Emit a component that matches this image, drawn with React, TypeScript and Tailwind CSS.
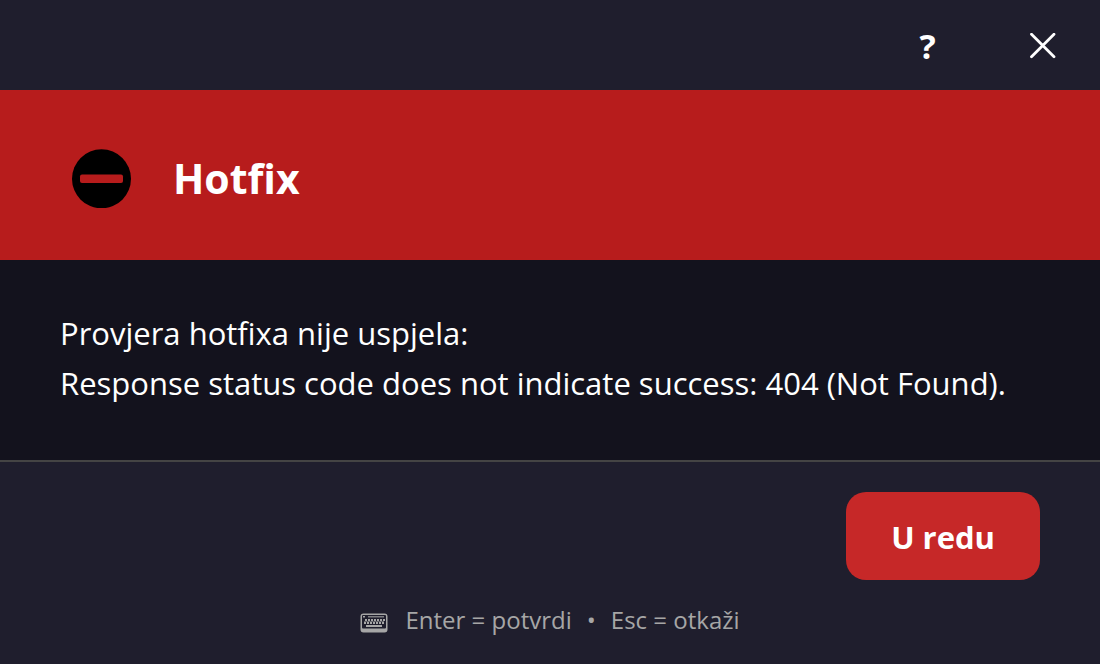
import { useState } from 'react';

const keyRows = [
  { y: 6, xs: [6, 9, 12, 15, 18, 21, 24] },
  { y: 9, xs: [5, 8, 11, 14, 17, 20, 23] },
];

function CloseIcon() {
  return (
    <svg width="26" height="26" viewBox="0 0 26 26" fill="none" stroke="currentColor" strokeWidth="2.8" strokeLinecap="round" aria-hidden="true">
      <path d="M1.500 1.200l22.500 22.500M24 1.200L1.500 23.700" />
    </svg>
  );
}

function NoEntryIcon() {
  return (
    <svg width="60" height="60" viewBox="0 0 60 60" className="shrink-0" aria-hidden="true">
      <circle cx="29.5" cy="30.800" r="29.5" fill="#000" />
      <rect x="8" y="26.500" width="43" height="8.500" rx="2" fill="#b71c1c" />
    </svg>
  );
}

function KeyboardIcon() {
  return (
    <svg width="28" height="20" viewBox="0 0 28 20" fill="currentColor" className="shrink-0" aria-hidden="true">
      <path
        fillRule="evenodd"
        d="M3.500 .5h21a3 3 0 0 1 3 3v13a3 3 0 0 1-3 3h-21a3 3 0 0 1-3-3v-13a3 3 0 0 1 3-3zM3 2a1 1 0 0 0-1 1V14.500a1 1 0 0 0 1 1h22a1 1 0 0 0 1-1V3a1 1 0 0 0-1-1z"
      />
      <rect x="3" y="3" width="2" height="1.500" />
      <rect x="8" y="3" width="16" height="1.500" opacity="0.7" />
      {keyRows.map(row =>
        row.xs.map(x => <rect key={`${row.y}-${x}`} x={x - 1} y={row.y} width="2" height="2" />)
      )}
      <rect x="4" y="8" width="20" height="1" opacity="0.5" />
      <rect x="6" y="12" width="16" height="2" />
    </svg>
  );
}

export default function App() {
  const [open, setOpen] = useState(true);
  const close = () => setOpen(false);

  if (!open) return null;

  return (
    <div
      role="dialog"
      aria-labelledby="dialog-title"
      className="min-h-screen flex flex-col bg-[#1f1e2d] text-white font-['Open_Sans','Noto_Sans',sans-serif]"
    >
      {/* Title bar */}
      <header className="h-[90px] pt-[2px] flex justify-end shrink-0">
        <button type="button" aria-label="Pomoć" className="w-[115px] text-[34px] font-bold">
          ?
        </button>
        <button type="button" aria-label="Zatvori" onClick={close} className="w-[115px] flex items-center justify-center">
          <CloseIcon />
        </button>
      </header>

      {/* Error banner */}
      <div className="flex items-center gap-[41px] px-[72px] pt-[58px] pb-[52px] bg-[#b71c1c]">
        <NoEntryIcon />
        <h1 id="dialog-title" className="text-[41px] leading-[60px] font-bold">Hotfix</h1>
      </div>

      {/* Message */}
      <main className="flex-1 px-[60px] pt-[48px] pb-[52px] bg-[#13121d] text-[31px] leading-[50px]">
        <p>Provjera hotfixa nije uspjela:</p>
        <p>Response status code does not indicate success: 404 (Not Found).</p>
      </main>

      {/* Actions */}
      <footer className="border-t-2 border-[#444444] px-[60px] pt-[30px] pb-[31px]">
        <div className="flex justify-end">
          <button type="button" onClick={close} className="h-[88px] px-[45px] pt-[2px] rounded-[20px] bg-[#c62828] text-[31px] font-bold">
            U redu
          </button>
        </div>
        <div className="mt-[27px] flex items-end justify-center gap-[17px] text-2xl leading-[26px] text-[#a6a6a6]">
          <KeyboardIcon />
          <p className="flex gap-[15px]">
            <span>Enter = potvrdi</span>
            <span>•</span>
            <span>Esc = otkaži</span>
          </p>
        </div>
      </footer>
    </div>
  );
}
